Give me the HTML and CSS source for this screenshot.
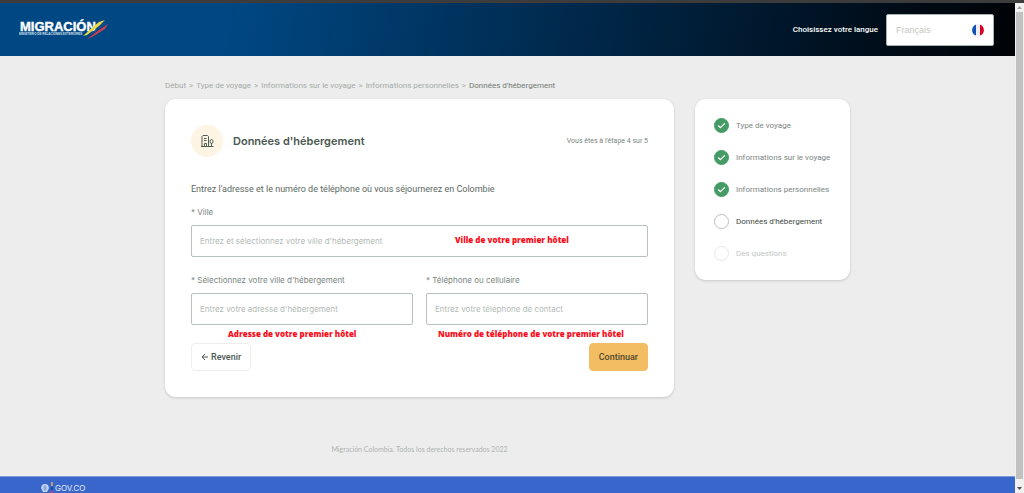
FILE: index.html
```
<!DOCTYPE html>
<html lang="fr">
<head>
  <meta charset="UTF-8" />
  <meta name="viewport" content="width=device-width, initial-scale=1" />
  <title>Migración Colombia</title>
  <link rel="stylesheet" href="styles.css">
</head>
<body>
  <div class="page">
    <header class="header">
      <svg class="logo" width="90" height="22" viewBox="0 0 90 22" role="img" aria-label="Migración">
        <text class="logo-name" x="1" y="12" font-size="13">MIGRACIÓN</text>
        <text class="logo-sub" x="0" y="16" font-size="3">MINISTERIO DE RELACIONES EXTERIORES</text>
        <path d="M64 17 L75 7 L80 3 L86 1 L80 7 L68 16 Z" fill="#e9d84a" />
        <path d="M71 15 L81 7 L86 3 L87 4 L75 14 Z" fill="#174d91" />
        <path d="M68 20 L80 11 L89 5 L86 10 L73 18 Z" fill="#d23c50" />
      </svg>
      <div class="language">
        <label for="language">Choisissez votre langue</label>
        <div class="language-box">
          <select id="language">
            <option>Français</option>
          </select>
          <svg class="flag" width="12" height="12" viewBox="0 0 12 12" aria-hidden="true">
            <circle cx="6" cy="6" r="6" fill="#f0f0f0" />
            <path d="M4 .4 A6 6 0 0 0 4 11.6 Z" fill="#0f52b5" />
            <path d="M8 .4 A6 6 0 0 1 8 11.6 Z" fill="#d80027" />
          </svg>
        </div>
      </div>
    </header>

    <main class="container">
      <nav class="breadcrumb" aria-label="Progression">
        <a href="#">Début</a><span>&gt;</span>
        <a href="#">Type de voyage</a><span>&gt;</span>
        <a href="#">Informations sur le voyage</a><span>&gt;</span>
        <a href="#">Informations personnelles</a><span>&gt;</span>
        <a href="#" class="current">Données d'hébergement</a>
      </nav>

      <div class="columns">
        <div class="content">
          <form class="card form">
            <div class="form-head">
              <div class="form-icon">
                <svg width="14" height="14" viewBox="0 0 14 14" fill="none" stroke="#4f5f57" aria-hidden="true">
                  <path d="M1 12.5 H13.5 M2 12.5 V2.5 L3 1.5 H7.500 L8.500 2.500 V12.500 M4 4.500 H6.500 M4 6.500 H6.500 M4.500 12.500 V9.500 H6.500 V12.500 M11.500 12.500 V9" />
                  <ellipse cx="11.500" cy="7.500" rx="1.500" ry="2" />
                </svg>
              </div>
              <h1>Données d'hébergement</h1>
              <span class="step-count">Vous êtes à l'étape 4 sur 5</span>
            </div>

            <p class="intro">Entrez l'adresse et le numéro de téléphone où vous séjournerez en Colombie</p>

            <div class="field">
              <label for="city">* Ville</label>
              <input type="text" id="city" placeholder="Entrez et sélectionnez votre ville d'hébergement">
              <span class="note note-city">Ville de votre premier hôtel</span>
            </div>

            <div class="field-row">
              <div class="field">
                <label for="address">* Sélectionnez votre ville d'hébergement</label>
                <input type="text" id="address" placeholder="Entrez votre adresse d'hébergement">
                <span class="note note-address">Adresse de votre premier hôtel</span>
              </div>
              <div class="field">
                <label for="phone">* Téléphone ou cellulaire</label>
                <input type="tel" id="phone" placeholder="Entrez votre téléphone de contact">
                <span class="note note-phone">Numéro de téléphone de votre premier hôtel</span>
              </div>
            </div>

            <div class="actions">
              <button type="button" class="btn btn-back">
                <svg width="7" height="8" viewBox="0 0 7 8" fill="none" stroke="currentColor" aria-hidden="true">
                  <path d="M7 4 H1 M4 1 L1 4 L4 7" />
                </svg>
                Revenir
              </button>
              <button type="submit" class="btn btn-next">Continuar</button>
            </div>
          </form>
          <p class="copyright">Migración Colombia. Todos los derechos reservados 2022</p>
        </div>

        <aside class="card steps">
          <ol>
            <li class="done"><i><svg width="9" height="9" viewBox="0 0 8 8"><path d="M1 4 L3 6 L7 2" /></svg></i>Type de voyage</li>
            <li class="done"><i><svg width="9" height="9" viewBox="0 0 8 8"><path d="M1 4 L3 6 L7 2" /></svg></i>Informations sur le voyage</li>
            <li class="done"><i><svg width="9" height="9" viewBox="0 0 8 8"><path d="M1 4 L3 6 L7 2" /></svg></i>Informations personnelles</li>
            <li class="active"><i></i>Données d'hébergement</li>
            <li class="pending"><i></i>Des questions</li>
          </ol>
        </aside>
      </div>
    </main>

    <footer class="govco">
      <svg width="13" height="12" viewBox="0 0 13 12" aria-hidden="true">
        <path d="M1 3 Q4 1 7 3 L8 6 L6 10 H2 L0 6 Z" fill="#c9d6f2" />
        <path d="M2 5 H6 M2 7 H6 M4 3 V9" stroke="#7f9bdb" fill="none" />
        <path d="M10 0 H12 V4 H10 Z" fill="#b79c77" />
        <path d="M10 5 H12 V8 H10 Z" fill="#174a9b" />
        <path d="M10 9 H12 V12 H10 Z" fill="#c34563" />
      </svg>
      <span>GOV.CO</span>
    </footer>
  </div>

  <div class="scrollbar" aria-hidden="true">
    <svg width="9" height="9" viewBox="0 0 9 9"><path d="M2 6 L4.500 3 L7 6 Z" fill="#a3a3a3" /></svg>
    <div class="thumb"></div>
    <svg width="9" height="9" viewBox="0 0 9 9"><path d="M2 3 L4.500 6 L7 3 Z" fill="#505050" /></svg>
  </div>
</body>
</html>
```
FILE: styles.css
```
* {
  box-sizing: border-box;
}

body {
  margin: 0;
  height: 100vh;
  display: flex;
  overflow: hidden;
  border-top: 3px solid #3c3c3c;
  font-family: Roboto, "Liberation Sans", sans-serif;
  font-size: 8px;
  line-height: 12px;
  color: #7b857f;
  background-color: #ededed;
}

.page {
  flex: 1;
  min-width: 0;
  display: flex;
  flex-direction: column;
}

.header {
  height: 53px;
  flex-shrink: 0;
  display: flex;
  align-items: center;
  justify-content: space-between;
  padding: 0 21px 0 19px;
  background: linear-gradient(100deg, #004884 22%, #000a14 90%, #000307 100%);
}

.logo-name {
  font-family: "Liberation Sans", sans-serif;
  font-weight: bold;
  fill: #fff;
  stroke: #fff;
  stroke-width: 0.4;
}

.logo-sub {
  font-family: "Liberation Sans", sans-serif;
  font-weight: bold;
  fill: #d5e2ee;
}

.language {
  display: flex;
  align-items: center;
  gap: 8px;
  color: #fff;
  font-weight: 500;
}

.language-box {
  position: relative;
}

.language select {
  appearance: none;
  display: block;
  width: 108px;
  height: 32px;
  padding: 0 9px;
  border: 1px solid #a7b5b2;
  border-radius: 2px;
  background-color: #fff;
  color: #c2c6c2;
  font-family: "Liberation Sans", sans-serif;
  font-size: 9px;
}

.flag {
  position: absolute;
  top: 10px;
  right: 10px;
}

.container {
  width: 100%;
  max-width: 685px;
  margin: 0 auto;
  padding-top: 24px;
}

.breadcrumb {
  display: flex;
  gap: 3px;
  margin-bottom: 7px;
  color: #a5aaa7;
}

.breadcrumb a {
  color: inherit;
  text-decoration: none;
}

.breadcrumb .current {
  color: #717974;
}

.columns {
  display: flex;
  align-items: flex-start;
  gap: 21px;
}

.content {
  flex: 1;
}

.card {
  background-color: #fff;
  border-radius: 11px;
  box-shadow: 0 1px 3px rgba(0, 0, 0, 0.16);
}

.form {
  padding: 26px;
}

.form-head {
  display: flex;
  align-items: center;
  margin-bottom: 26px;
}

.form-icon {
  width: 32px;
  height: 32px;
  display: flex;
  align-items: center;
  justify-content: center;
  border-radius: 50%;
  background-color: #fef4e4;
}

h1 {
  flex: 1;
  margin: 0 0 0 10px;
  font-family: Inter, sans-serif;
  font-size: 11px;
  font-weight: 600;
  color: #4b5850;
}

.step-count {
  font-size: 7px;
}

.intro {
  margin: 0 0 11px;
  font-size: 9px;
  color: #5d6862;
}

.field {
  position: relative;
  flex: 1;
}

.field label {
  display: block;
  margin-bottom: 7px;
  font-family: Inter, sans-serif;
}

.field input {
  display: block;
  width: 100%;
  height: 32px;
  padding: 0 8px;
  border: 1px solid #b9c1bd;
  border-radius: 2px;
  background-color: #fff;
  font-family: Inter, sans-serif;
  font-size: 8px;
}

.field input::placeholder {
  color: #b4bab6;
}

.field-row {
  display: flex;
  gap: 13px;
  margin-top: 17px;
}

/* red hints drawn over the form */
.note {
  position: absolute;
  font-family: "Open Sans", sans-serif;
  font-weight: 800;
  white-space: nowrap;
  color: #fb0d1b;
}

.note-city {
  bottom: 11px;
  left: 264px;
}

.note-address {
  top: 100%;
  left: 37px;
  margin-top: 3px;
}

.note-phone {
  top: 100%;
  left: 12px;
  margin-top: 3px;
}

.actions {
  display: flex;
  justify-content: space-between;
  margin-top: 18px;
}

.btn {
  height: 28px;
  display: flex;
  align-items: center;
  justify-content: center;
  gap: 3px;
  padding: 0 9px;
  border: 1px solid #ededed;
  border-radius: 4px;
  background-color: #fff;
  font-family: inherit;
  font-size: 9px;
  font-weight: 500;
  color: #4b5850;
  cursor: pointer;
}

.btn-next {
  border-color: #f3bd63;
  background-color: #f3bd63;
  color: #4f4a2c;
}

.copyright {
  margin: 46px 0 0;
  font-family: Lato, sans-serif;
  font-size: 7px;
  text-align: center;
  color: #b0b3b1;
}

.steps {
  width: 155px;
  padding: 19px;
}

.steps ol {
  display: flex;
  flex-direction: column;
  gap: 17px;
  margin: 0;
  padding: 0;
  list-style: none;
}

.steps li {
  display: flex;
  align-items: center;
  gap: 7px;
  white-space: nowrap;
}

.steps i {
  width: 15px;
  height: 15px;
  flex-shrink: 0;
  display: flex;
  align-items: center;
  justify-content: center;
  border: 1px solid #b8bfbc;
  border-radius: 50%;
}

.steps path {
  fill: none;
  stroke: #fff;
}

.steps .done i {
  border-color: #459b64;
  background-color: #459b64;
}

.steps .active {
  color: #3f4a45;
}

.steps .pending {
  color: #c3c7c4;
}

.steps .pending i {
  border-color: #e6e8e7;
}

.govco {
  height: 17px;
  flex-shrink: 0;
  display: flex;
  gap: 1px;
  margin-top: auto;
  padding: 5px 41px 0;
  border-top: 1px solid #7f9bdb;
  background-color: #3966ca;
  color: #e3eafa;
  font-family: Inter, sans-serif;
}

.scrollbar {
  width: 9px;
  display: flex;
  flex-direction: column;
  background-color: #f1f1f1;
}

.scrollbar .thumb {
  flex: 1;
  margin: 0 1px 5px;
  background-color: #c1c1c1;
}
```
